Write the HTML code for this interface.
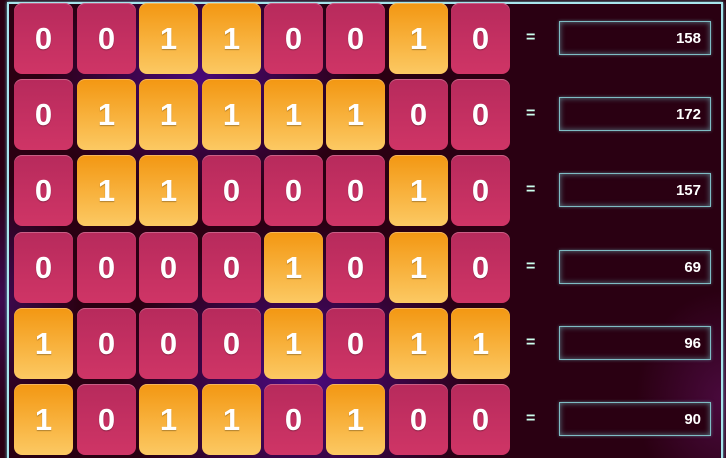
<!DOCTYPE html>
<html><head><style>
html,body{margin:0;width:726px;height:458px;overflow:hidden}
body{background:#24000f;position:relative;font-family:"Liberation Sans",Arial,sans-serif}
.bg{position:absolute;left:0;top:0;width:726px;height:458px;background:radial-gradient(ellipse 160px 120px at 200px 80px,#4a0878 0%,rgba(60,0,90,0) 100%),radial-gradient(ellipse 180px 160px at 300px 380px,#4a0a80 0%,rgba(60,0,90,0) 100%),radial-gradient(ellipse 90px 110px at 726px 400px,#4a0a3e 0%,rgba(0,0,0,0) 100%),radial-gradient(ellipse 80px 120px at 0px 300px,#3c0a50 0%,rgba(0,0,0,0) 100%),#2a0012}
.frame{position:absolute;left:7px;top:2px;width:712px;height:456px;border:2px solid #a8e4ec;border-bottom:none;box-shadow:0 0 3px #6cc;box-sizing:content-box}
.t{position:absolute;width:59px;height:71px;border-radius:8px;color:#fff;font-weight:bold;font-size:31px;text-align:center;line-height:71px;text-shadow:0 1px 1px rgba(0,0,0,.3)}
.p{background:linear-gradient(#b72a5c,#cf3566);box-shadow:inset 0 1px 0 rgba(255,255,255,.25)}
.o{background:linear-gradient(#f39712,#fcc963);box-shadow:inset 0 1px 0 rgba(255,255,255,.3)}
.eq{position:absolute;left:526px;color:#cfe;font-weight:bold;font-size:16px}
.box{position:absolute;left:559px;width:152px;height:34px;border:1px solid #7fbcc4;background:#2a0012;box-shadow:inset 0 0 6px rgba(120,200,210,.6),0 0 3px rgba(120,200,210,.5);color:#fff;font-weight:bold;font-size:15px;text-align:right;line-height:34px;box-sizing:border-box;padding-right:9px}
</style></head><body><div class="bg"></div><div class="frame"></div>
<div id="g"></div>
<script>
var rows=["00110010","01111100","01100010","00001010","10001011","10110100"];
var vals=[158,172,157,69,96,90];
var xs=[14,77,139,202,264,326,389,451];
var ys=[3,79,155,232,308,384];
var h="";
rows.forEach(function(r,i){
 for(var j=0;j<8;j++){var c=r[j];h+='<div class="t '+(c=="1"?"o":"p")+'" style="left:'+xs[j]+'px;top:'+ys[i]+'px">'+c+'</div>';}
 h+='<div class="eq" style="top:'+(ys[i]+26)+'px">=</div>';
 h+='<div class="box" style="top:'+(ys[i]+18)+'px">'+vals[i]+'</div>';
});
document.getElementById("g").innerHTML=h;
</script>
</body></html>
